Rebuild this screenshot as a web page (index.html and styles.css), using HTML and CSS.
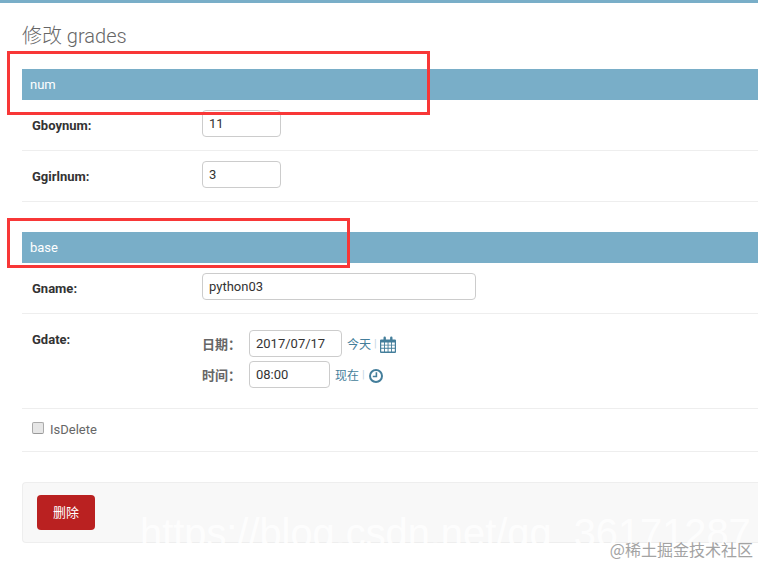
FILE: index.html
```html
<!DOCTYPE html>
<html lang="zh">
<head>
<meta charset="utf-8">
<title>修改 grades</title>
<link rel="stylesheet" href="styles.css">
</head>
<body>
<div class="topbar"></div>
<main class="content">
  <h1 class="title">修改 grades</h1>
  <section class="fieldset">
    <h2 class="legend">num</h2>
    <div class="row">
      <label class="label">Gboynum:</label>
      <input class="input num" value="11">
    </div>
    <div class="row">
      <label class="label">Ggirlnum:</label>
      <input class="input num" value="3">
    </div>
  </section>
  <section class="fieldset second">
    <h2 class="legend">base</h2>
    <div class="row">
      <label class="label">Gname:</label>
      <input class="input wide" value="python03">
    </div>
    <div class="row dates">
      <label class="label">Gdate:</label>
      <div class="datetime">
        <div class="dt-line">
          <span class="dt-label">日期：</span>
          <input class="input date" value="2017/07/17">
          <span class="shortcuts"><a class="link">今天</a><span class="sep">|</span>
            <svg class="icon" width="16" height="17" viewBox="0 0 16 17">
              <path fill="#447e9b" d="M1 3.5h2.5V1.800a1.200 1.200 0 0 1 2.400 0v1.700h4.200V1.800a1.200 1.200 0 0 1 2.400 0v1.700H15a1 1 0 0 1 1 1V16a1 1 0 0 1-1 1H1a1 1 0 0 1-1-1V4.500a1 1 0 0 1 1-1z"/>
              <path fill="#fff" d="M1.200 6.500h2.900v2.200H1.200zM5 6.500h2.600v2.200H5zM8.500 6.500h2.600v2.200H8.500zM12 6.500h2.800v2.200H12zM1.200 9.500h2.900v2.300H1.200zM5 9.500h2.600v2.300H5zM8.500 9.500h2.600v2.300H8.500zM12 9.500h2.800v2.300H12zM1.200 12.700h2.900v2.900H1.200zM5 12.700h2.600v2.900H5zM8.500 12.700h2.600v2.900H8.500zM12 12.700h2.800v2.900H12z"/>
            </svg>
          </span>
        </div>
        <div class="dt-line">
          <span class="dt-label">时间：</span>
          <input class="input time" value="08:00">
          <span class="shortcuts"><a class="link">现在</a><span class="sep">|</span>
            <svg class="icon clock" width="14" height="14" viewBox="0 0 14 14">
              <circle cx="7" cy="7" r="6" fill="none" stroke="#447e9b" stroke-width="2"/>
              <path fill="none" stroke="#447e9b" stroke-width="1.600" d="M7.400 3.200v4.300H3.800"/>
            </svg>
          </span>
        </div>
      </div>
    </div>
    <div class="row check">
      <input class="checkbox" type="checkbox">
      <label class="check-label">IsDelete</label>
    </div>
  </section>
  <div class="submit-row">
    <a class="delete">删除</a>
  </div>
</main>
<div class="annotation box-one"></div>
<div class="annotation box-two"></div>
<div class="watermark">https://blog.csdn.net/qq_36171287</div>
<div class="credit">@稀土掘金技术社区</div>
</body>
</html>
```
FILE: styles.css
```css
html, body {
  margin: 0;
  padding: 0;
  width: 758px;
  height: 565px;
  overflow: hidden;
  background: #fff;
  font-family: Roboto, "Noto Sans CJK SC", sans-serif;
  color: #333;
  font-size: 13px;
}
body { position: relative; }
.topbar { height: 3px; background: #79aec8; }
.content { padding: 0 0 0 22px; }
.title {
  margin: 0;
  padding-top: 21px;
  height: 45px;
  font-size: 20px;
  line-height: 24px;
  font-weight: 300;
  color: #666;
}
.fieldset { margin: 0; }
.fieldset.second { margin-top: 30px; }
.legend {
  margin: 0;
  height: 31px;
  padding-left: 8px;
  background: #79aec8;
  color: #fff;
  font-size: 13px;
  font-weight: 400;
  line-height: 31px;
}
.row {
  display: flex;
  align-items: flex-start;
  height: 50px;
  border-bottom: 1px solid #eee;
  padding-left: 10px;
}
.label {
  width: 170px;
  flex: none;
  font-weight: 700;
  font-size: 13px;
  color: #333;
  line-height: 16px;
  padding-top: 18px;
}
.input {
  box-sizing: border-box;
  height: 27px;
  margin: 10px 0 0;
  padding: 0 6px;
  border: 1px solid #ccc;
  border-radius: 4px;
  background: #fff;
  font-family: Roboto, sans-serif;
  font-size: 13px;
  color: #333;
  outline: none;
}
.num { width: 79px; }
.wide { width: 274px; }
.dates { height: 94px; }
.dates .label { padding-top: 18px; }
.datetime { display: flex; flex-direction: column; padding-top: 15px; gap: 3px; }
.dt-line { display: flex; align-items: center; height: 28px; }
.dt-label { width: 47px; font-weight: 700; color: #666; font-size: 13px; flex: none; }
.date { width: 93px; margin: 0; }
.time { width: 81px; margin: 0; }
.shortcuts { display: flex; align-items: center; margin-left: 5px; font-size: 12px; }
.link { color: #447e9b; }
.sep { color: #c5d8e3; margin: 0 3px; font-size: 11px; }
.icon { display: block; margin-top: 2px; }
.clock { margin-left: 1px; margin-top: 4px; }
.check { height: 42px; align-items: center; }
.checkbox {
  appearance: none;
  width: 12px;
  height: 12px;
  margin: 0 6px 0 0;
  border: 1px solid #aaa;
  border-bottom-color: #999;
  border-radius: 2px;
  background: #e6e6e6;
  position: relative;
  top: -2px;
}
.check-label { color: #666; font-size: 13px; line-height: 16px; }
.submit-row {
  margin-top: 30px;
  height: 61px;
  padding: 12px 0 0 14px;
  box-sizing: border-box;
  background: #f8f8f8;
  border: 1px solid #eee;
  border-right: 0;
  border-radius: 4px 0 0 4px;
}
.delete {
  display: block;
  width: 58px;
  height: 35px;
  line-height: 35px;
  background: #ba2121;
  color: #fff;
  border-radius: 4px;
  text-align: center;
  font-size: 13px;
}
.annotation {
  position: absolute;
  box-sizing: border-box;
  border: 3px solid #f83737;
}
.box-one { left: 7px; top: 51px; width: 423px; height: 64px; }
.box-two { left: 7px; top: 218px; width: 343px; height: 50px; }
.watermark {
  position: absolute;
  left: 140px;
  top: 508px;
  font-family: "Liberation Sans", sans-serif;
  font-size: 39.800px;
  line-height: 50px;
  color: rgba(255, 255, 255, 0.85);
  white-space: nowrap;
}
.credit {
  position: absolute;
  right: 5px;
  top: 539px;
  font-size: 16px;
  line-height: 20px;
  color: #a3a3a3;
  font-family: "Noto Sans CJK SC", sans-serif;
  white-space: nowrap;
}
```
